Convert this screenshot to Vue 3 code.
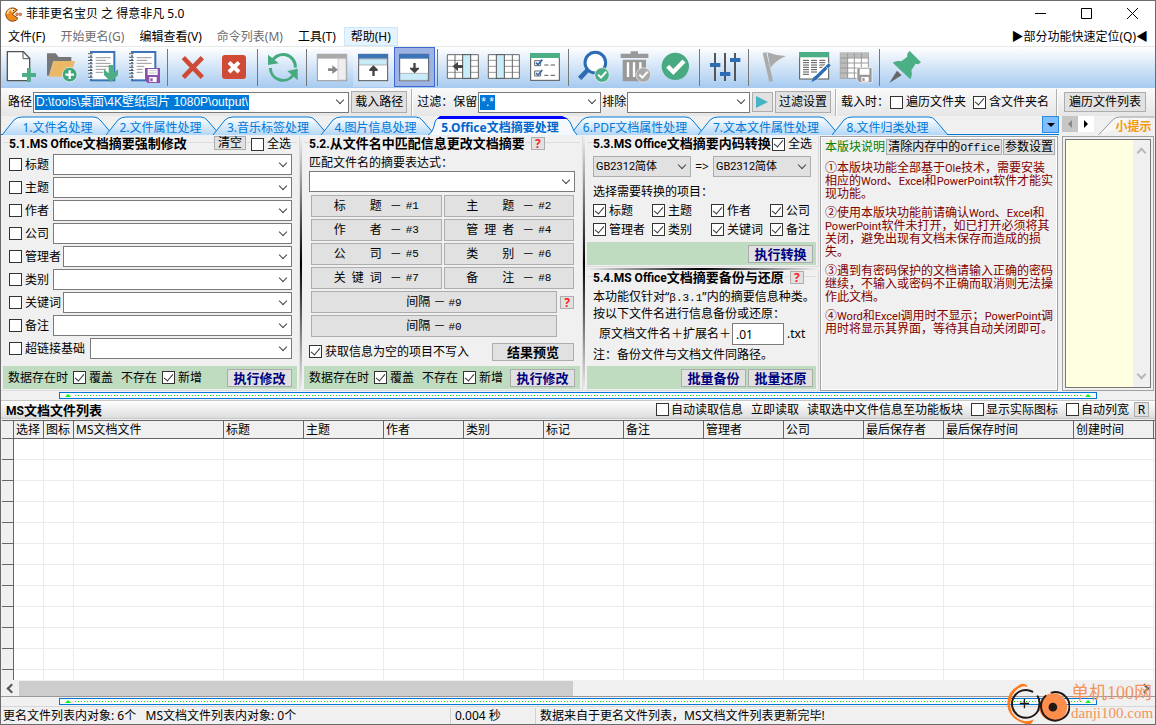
<script setup>
import { ref } from 'vue'

const tabs = [
  { label: '1.文件名处理', w: 111 },
  { label: '2.文件属性处理', w: 114 },
  { label: '3.音乐标签处理', w: 115 },
  { label: '4.图片信息处理', w: 114 },
  { label: '5.Office文档摘要处理', w: 149, active: true },
  { label: '6.PDF文档属性处理', w: 135 },
  { label: '7.文本文件属性处理', w: 141 },
  { label: '8.文件归类处理', w: 116 }
]
const tabPath = (t) => t.active
  ? `M0 19Q5 17 7 6Q9 1 14 1H${t.w - 15}Q${t.w - 10} 1 ${t.w - 7} 6L${t.w - 3} 15L${t.w} 19`
  : `M0 19L12 4Q15 1 20 1H${t.w - 19}Q${t.w - 15} 1 ${t.w - 12} 5L${t.w} 19`

const menus = [
  { t: '文件(F)' }, { t: '开始更名(G)', off: true }, { t: '编辑查看(V)' },
  { t: '命令列表(M)', off: true }, { t: '工具(T)' }, { t: '帮助(H)', hot: true }
]
const fields = ['标题', '主题', '作者', '公司', '管理者', '类别', '关键词', '备注', '超链接基础']
const fieldClass = (f) => (f.length === 2 ? 'short' : f.length === 3 ? 'mid' : 'long')
const marks = [
  ['标　　题', '#1'], ['主　　题', '#2'], ['作　　者', '#3'], ['管 理 者', '#4'],
  ['公　　司', '#5'], ['类　　别', '#6'], ['关 键 词', '#7'], ['备　　注', '#8']
]
const convert = ['标题', '主题', '作者', '公司', '管理者', '类别', '关键词', '备注']
const notes = [
  '①本版块功能全部基于Ole技术，需要安装\n相应的Word、Excel和PowerPoint软件才能实\n现功能。',
  '②使用本版块功能前请确认Word、Excel和\nPowerPoint软件未打开，如已打开必须将其\n关闭，避免出现有文档未保存而造成的损\n失。',
  '③遇到有密码保护的文档请输入正确的密码\n继续，不输入或密码不正确而取消则无法操\n作此文档。',
  '④Word和Excel调用时不显示；PowerPoint调\n用时将显示其界面，等待其自动关闭即可。'
]
const runs = (text) => text.split(/([A-Za-z]+)/).map((s) => ({ s, latin: /^[A-Za-z]/.test(s) }))
const columns = [
  ['', 12], ['选择', 30], ['图标', 30], ['MS文档文件', 150], ['标题', 80], ['主题', 80], ['作者', 80],
  ['类别', 80], ['标记', 80], ['备注', 80], ['管理者', 80], ['公司', 80], ['最后保存者', 80],
  ['最后保存时间', 130], ['创建时间', 80], ['', 2]
]
const path = ref('D:\\tools\\桌面\\4K壁纸图片 1080P\\output\\')
const keep = ref('*.*')
const suffix = ref('.01')
</script>

<template>
  <div class="window">
    <header class="titlebar">
      <svg class="logo" viewBox="0 0 54 48" aria-hidden="true">
        <path d="M22 25L37 12A20 20 0 1 0 39 37Z" fill="#ef8a1c" stroke="#8a4308" stroke-width="3" />
        <path d="M18 9Q8 13 7 24" stroke="#ffd98a" stroke-width="5" fill="none" />
        <circle cx="23" cy="13" r="5" fill="#fff" /><circle cx="25" cy="14" r="2" fill="#222" />
        <circle cx="36" cy="25" r="4" fill="#e9a06a" stroke="#a34a2a" stroke-width="2" /><circle cx="46" cy="25" r="4" fill="#e9a06a" stroke="#a34a2a" stroke-width="2" />
      </svg>
      <span class="caption">菲菲更名宝贝 之 得意非凡 5.0</span>
      <button class="winbtn" aria-label="最小化"><svg viewBox="0 0 11 11"><path d="M0 5.5H11" /></svg></button>
      <button class="winbtn" aria-label="最大化"><svg viewBox="0 0 11 11"><path d="M.5 .5H10.5V10.5H.5Z" /></svg></button>
      <button class="winbtn" aria-label="关闭"><svg viewBox="0 0 11 11"><path d="M0 0L11 11M11 0L0 11" /></svg></button>
    </header>

    <nav class="menubar">
      <button v-for="m in menus" :key="m.t" :class="{ off: m.off, hot: m.hot }">{{ m.t }}</button>
      <button class="locate">▶部分功能快速定位(Q)◀</button>
    </nav>

    <div class="toolbar">
      <button aria-label="新建"><svg viewBox="3 141 123 120">
        <path d="M22 155H70L89 175V242H22Z" fill="#fff" stroke="#555" stroke-width="4" /><path d="M69 156V176H89" fill="none" stroke="#555" stroke-width="3" />
        <path d="M81 204h11v15h16v12H92v15H81v-15H66v-12h15z" fill="#4bae84" /></svg></button>
      <button aria-label="添加文件夹"><svg viewBox="126 141 123 120">
        <path d="M141 160h26l9 11h38v12h-54l-13 44h-6z" fill="#777" /><path d="M161 183h64l-15 47h-63z" fill="#ebb868" />
        <circle cx="209" cy="224" r="22" fill="#3fa57a" stroke="#fff" stroke-width="2" /><path d="M209 211V237M196 224H222" stroke="#fff" stroke-width="7" /></svg></button>
      <button aria-label="导入列表"><svg viewBox="249 141 123 120">
        <rect x="273" y="156" width="70" height="85" fill="#fff" stroke="#3c74b5" stroke-width="6" />
        <path d="M287 173H332M287 181H318M287 190H332M287 199H332M287 208H318M287 217H310" stroke="#999" stroke-width="3" />
        <path d="M271 160V240" stroke="#fff" stroke-width="13" stroke-dasharray="6 4" /><path d="M271 160V240" stroke="#555" stroke-width="14" stroke-dasharray="3 7" />
        <path d="M326 195h14v25l14-12v17l-21 21-21-21v-17l14 12z" fill="#4bae84" /></svg></button>
      <button aria-label="保存列表"><svg viewBox="372 141 123 120">
        <rect x="396" y="156" width="70" height="85" fill="#fff" stroke="#3c74b5" stroke-width="6" />
        <path d="M410 173H455M410 181H441M410 190H455M410 199H432M410 208H428M410 217H428" stroke="#999" stroke-width="3" />
        <path d="M394 160V240" stroke="#fff" stroke-width="13" stroke-dasharray="6 4" /><path d="M394 160V240" stroke="#555" stroke-width="14" stroke-dasharray="3 7" />
        <path d="M435 204h45v45h-37l-8-8z" fill="#8e50ad" /><path d="M443 207h30v18h-30zM448 231h22v15h-22z" fill="#fff" /><path d="M446 212H470M446 219H470" stroke="#aaa" stroke-width="2" /><path d="M451 235h7v9h-7z" fill="#8e50ad" /></svg></button>
      <i class="sep"></i>
      <button aria-label="移除"><svg viewBox="519 141 123 120"><path d="M550 173L607 232M607 173L550 232" stroke="#cf4b35" stroke-width="14" /></svg></button>
      <button aria-label="清空列表"><svg viewBox="642 141 123 120"><rect x="666" y="165" width="72" height="72" rx="9" fill="#cf4b35" /><path d="M687 187L717 216M717 187L687 216" stroke="#fff" stroke-width="12" /></svg></button>
      <i class="sep"></i>
      <button aria-label="刷新"><svg viewBox="789 141 123 120">
        <path d="M815 186A37 37 0 0 1 886 203M811 204A38 38 0 0 0 880 225" fill="none" stroke="#45aa7d" stroke-width="9" />
        <path d="M804 164V195L836 190ZM893 241V206L862 213Z" fill="#45aa7d" /></svg></button>
      <i class="sep"></i>
      <button aria-label="右侧面板" disabled><svg viewBox="66 141 123 120">
        <rect x="82" y="163" width="88" height="79" fill="#fff" stroke="#999" stroke-width="3" /><rect x="81" y="162" width="90" height="14" fill="#aaa" />
        <path d="M144 176h24v64h-24z" fill="#eee" stroke="#bbb" stroke-width="2" /><path d="M114 205h13v-9l17 13-17 13v-9h-13z" fill="#888" /></svg></button>
      <button class="soft" aria-label="上方面板"><svg viewBox="189 141 123 120">
        <rect x="206" y="163" width="87" height="79" fill="#fff" stroke="#555" stroke-width="3" /><rect x="204" y="162" width="90" height="14" fill="#3c74b5" />
        <path d="M207 177h84v18h-84z" fill="#c9ecfb" stroke="#999" stroke-width="2" /><path d="M247 228v-15h-9v-5l12-12 13 12v5h-9v15z" fill="#444" /></svg></button>
      <button class="on" aria-label="下方面板"><svg viewBox="312 141 123 120">
        <rect x="329" y="163" width="87" height="79" fill="#fff" stroke="#555" stroke-width="3" /><rect x="327" y="162" width="90" height="14" fill="#3c74b5" />
        <path d="M330 220h84v21h-84z" fill="#c9ecfb" stroke="#999" stroke-width="2" /><path d="M370 189h7v14h10v4l-13 13-14-13v-4h10z" fill="#444" /></svg></button>
      <i class="sep"></i>
      <button aria-label="插入列"><svg viewBox="459 141 123 120">
        <rect x="472" y="164" width="93" height="71" fill="#fff" /><path d="M472 181H565M472 199H565M472 217H565" stroke="#999" stroke-width="3" />
        <path d="M472 164H565V235H472ZM495 164V235" fill="none" stroke="#666" stroke-width="3" /><rect x="518" y="164" width="24" height="71" fill="#c9ecfb" stroke="#555" stroke-width="3" />
        <path d="M488 199l16-14v10h15v9h-15v10z" fill="#444" /></svg></button>
      <button aria-label="列设置"><svg viewBox="582 141 123 120">
        <rect x="595" y="164" width="93" height="71" fill="#fff" /><path d="M595 181H688M595 199H688M595 217H688" stroke="#999" stroke-width="3" />
        <path d="M595 164H688V235H595ZM667 164V235" fill="none" stroke="#666" stroke-width="3" /><rect x="619" y="164" width="24" height="71" fill="#c9ecfb" stroke="#555" stroke-width="3" /></svg></button>
      <button aria-label="选项"><svg viewBox="705 141 123 120">
        <rect x="722" y="162" width="86" height="79" fill="#fff" stroke="#555" stroke-width="3" /><rect x="720" y="159" width="90" height="15" fill="#4bae84" />
        <path d="M734 182h18v15h-18zM734 213h18v15h-18z" fill="#fff" stroke="#666" stroke-width="3" /><path d="M738 188l6 6 13-15M738 219l6 6 13-15" fill="none" stroke="#3469a8" stroke-width="5" />
        <path d="M763 195H775M782 195H795M763 226H775M782 226H795" stroke="#555" stroke-width="3" /></svg></button>
      <i class="sep"></i>
      <button aria-label="查找"><svg viewBox="-18 141 123 120">
        <path d="M23 210L-1 235" stroke="#2c6cb5" stroke-width="14" /><circle cx="46" cy="188" r="31" fill="#fff" stroke="#2c6cb5" stroke-width="9" />
        <circle cx="66" cy="225" r="22" fill="#4bae84" stroke="#fff" stroke-width="2" /><path d="M54 224l9 9 16-18" fill="none" stroke="#fff" stroke-width="6" /></svg></button>
      <button aria-label="删除" disabled><svg viewBox="105 141 123 120">
        <path d="M122 161h30v-7h22v7h31v13h-83zM128 179h70v65h-70z" fill="#999" /><path d="M144 187V231M162 187V231M181 187V231" stroke="#fff" stroke-width="7" />
        <circle cx="190" cy="225" r="22" fill="#aaa" stroke="#eee" stroke-width="2" /><path d="M178 224l9 9 16-18" fill="none" stroke="#fff" stroke-width="6" /></svg></button>
      <button aria-label="执行"><svg viewBox="228 141 123 120"><circle cx="286" cy="199" r="41" fill="#48aa80" /><path d="M263 199l17 17 32-33" fill="none" stroke="#fff" stroke-width="13" /></svg></button>
      <i class="sep"></i>
      <button aria-label="参数"><svg viewBox="375 141 123 120">
        <path d="M405 159V243M435 159V243M465 159V243" stroke="#555" stroke-width="6" /><path d="M390 189h31v12h-31zM420 216h31v12h-31zM450 174h31v12h-31z" fill="#2c6cb5" /></svg></button>
      <i class="sep"></i>
      <button aria-label="标记" disabled><svg viewBox="522 141 123 120"><path d="M548 159l11-2 20 86-11 2z" fill="#aaa" /><path d="M562 157Q590 168 618 168Q592 178 571 203Z" fill="#aaa" /></svg></button>
      <button aria-label="编辑表格"><svg viewBox="645 141 123 120">
        <rect x="659" y="158" width="87" height="79" fill="#fff" stroke="#555" stroke-width="3" /><rect x="657" y="156" width="90" height="16" fill="#4bae84" />
        <path d="M669 181H687M669 188H687M669 195H687M669 202H687M669 209H687M669 216H687M669 223H687M693 181H711M693 188H711M693 195H711M693 202H711M693 209H711M693 216H711M718 181H736M718 188H736M718 195H736M718 202H736" stroke="#555" stroke-width="3" />
        <path d="M748 192L704 236" stroke="#fff" stroke-width="15" /><path d="M749 193L704 237" stroke="#2c6cb5" stroke-width="10" /><path d="M702 229l9 9-17 9z" fill="#2c6cb5" /><path d="M737 200l7 7" stroke="#fff" stroke-width="2" /></svg></button>
      <button aria-label="保存表格" disabled><svg viewBox="768 141 123 120">
        <rect x="781" y="159" width="84" height="76" fill="#fff" stroke="#999" stroke-width="3" /><path d="M781 159H865V173H804V235H781Z" fill="#bbb" />
        <path d="M781 174H865M781 189H865M781 204H865M781 219H865M803 159V235M823 159V235M844 159V235" stroke="#999" stroke-width="3" />
        <path d="M831 203h45v45h-37l-8-8z" fill="#999" stroke="#fff" stroke-width="2" /><path d="M839 206h29v18h-29zM844 231h22v14h-22z" fill="#fff" /><path d="M847 234h7v9h-7z" fill="#999" /></svg></button>
      <i class="sep"></i>
      <button aria-label="置顶"><svg viewBox="45 141 123 120"><path d="M81 212l14 14-37 23z" fill="#666" /><path d="M119 153L153 187L145 193L137 191L124 211Q128 225 121 238L68 188Q80 180 94 184L112 170Q110 160 119 153Z" fill="#4bae84" /></svg></button>
    </div>

    <div class="pathbar">
      <label for="path">路径</label>
      <div class="combo path"><input id="path" v-model="path" class="sel"><i class="chev"></i></div>
      <button class="btn b56">载入路径</button>
      <i class="vline"></i>
      <span>过滤：</span>
      <label for="keep" class="keep">保留</label>
      <div class="combo filt"><input id="keep" v-model="keep" class="sel"><i class="chev"></i></div>
      <label for="skip">排除</label>
      <div class="combo filt"><input id="skip"><i class="chev"></i></div>
      <button class="btn play" aria-label="应用过滤"><svg viewBox="0 0 12 12"><path d="M0 0L12 6L0 12Z" fill="#45b5c5" /></svg></button>
      <button class="btn b56">过滤设置</button>
      <i class="vline"></i>
      <span class="load">载入时：</span>
      <label class="ck"><input type="checkbox">遍历文件夹</label>
      <label class="ck gap7"><input type="checkbox" checked>含文件夹名</label>
      <i class="vline end"></i>
      <button class="btn b82">遍历文件列表</button>
    </div>

    <div class="workspace">
      <div class="tabrow">
        <div class="tabs" role="tablist">
          <button v-for="t in tabs" :key="t.label" role="tab" class="tab" :class="{ active: t.active }" :style="{ width: t.w + 'px' }">
            <svg :viewBox="`0 0 ${t.w} 19`" aria-hidden="true">
              <defs><linearGradient id="tabfill" x2="0" y2="1"><stop stop-color="#fff" /><stop offset="1" stop-color="#b4d7f6" /></linearGradient></defs>
              <path :d="tabPath(t)" :fill="t.active ? '#f5f9fd' : 'url(#tabfill)'" stroke="#0078d7" />
              <path v-if="t.active" :d="`M9 3L12 0H${t.w - 15}L${t.w - 9} 3Z`" fill="#00f" />
            </svg>
            <span>{{ t.label }}</span>
          </button>
        </div>
        <button class="tabmenu" aria-label="全部页签"><svg viewBox="0 0 8 4"><path d="M0 0H8L4 4Z" /></svg></button>
      </div>
      <div class="siderow">
        <button class="arrow dim" aria-label="向左"><svg viewBox="0 0 4 8"><path d="M4 0V8L0 4Z" fill="#888" /></svg></button>
        <button class="arrow" aria-label="向右"><svg viewBox="0 0 4 8"><path d="M0 0V8L4 4Z" /></svg></button>
        <div class="hint"><svg viewBox="0 0 56 19" aria-hidden="true"><path d="M0 19L14 4Q17 1 21 1H56" fill="#f7f7f7" stroke="#999" /></svg><span>小提示</span></div>
      </div>

      <div class="panels">
        <section class="group p1">
          <div class="head"><h2><span>5.1.MS Office</span>文档摘要强制修改</h2><button class="btn tiny push">清空</button><label class="ck"><input type="checkbox">全选</label></div>
          <div class="fields">
            <div v-for="(f, i) in fields" :key="f" class="field">
              <label class="ck" :class="fieldClass(f)"><input type="checkbox">{{ f }}</label>
              <div class="combo"><input :id="'f' + i" :aria-label="f"><i class="chev"></i></div>
            </div>
          </div>
          <div class="band"><span>数据存在时</span><label class="ck"><input type="checkbox" checked>覆盖</label><span class="no">不存在</span><label class="ck"><input type="checkbox" checked>新增</label><button class="btn act push">执行修改</button></div>
        </section>
        <i class="vsplit"></i>

        <section class="group p2">
          <div class="head"><h2><span>5.2.</span>从文件名中匹配信息更改文档摘要</h2><button class="btn q">?</button></div>
          <label class="line" for="expr">匹配文件名的摘要表达式：</label>
          <div class="combo expr"><input id="expr"><i class="chev"></i></div>
          <div class="marks">
            <button v-for="m in marks" :key="m[1]" class="btn"><span class="mk">{{ m[0] }}</span><span>－</span><span class="mono">{{ m[1] }}</span></button>
          </div>
          <div class="spacers">
            <button class="btn">间隔 － <span class="mono">#9</span></button><button class="btn q">?</button>
            <button class="btn">间隔 － <span class="mono">#0</span></button>
          </div>
          <div class="preview"><label class="ck"><input type="checkbox" checked>获取信息为空的项目不写入</label><button class="btn result push">结果预览</button></div>
          <div class="band"><span>数据存在时</span><label class="ck"><input type="checkbox" checked>覆盖</label><span class="no">不存在</span><label class="ck"><input type="checkbox" checked>新增</label><button class="btn act push">执行修改</button></div>
        </section>
        <i class="vsplit"></i>

        <div class="stack">
          <section class="group p3">
            <div class="head"><h2><span>5.3.MS Office</span>文档摘要内码转换</h2><label class="ck push"><input type="checkbox" checked>全选</label></div>
            <div class="codes">
              <div class="combo grey"><select aria-label="源内码"><option>GB2312简体</option></select><i class="chev"></i></div>
              <span>=&gt;</span>
              <div class="combo grey"><select aria-label="目标内码"><option>GB2312简体</option></select><i class="chev"></i></div>
            </div>
            <p class="line need">选择需要转换的项目：</p>
            <div class="items"><label v-for="c in convert" :key="c" class="ck"><input type="checkbox" checked>{{ c }}</label></div>
            <div class="band"><button class="btn act push">执行转换</button></div>
          </section>
          <i class="hsplit"></i>
          <section class="group p3 backup">
            <div class="head"><h2><span>5.4.MS Office</span>文档摘要备份与还原</h2><button class="btn q">?</button></div>
            <p class="line">本功能仅针对“<span class="mono">β.3.1</span>”内的摘要信息种类。</p>
            <p class="line">按以下文件名进行信息备份或还原：</p>
            <div class="rename"><label for="suffix">原文档文件名＋扩展名＋</label><input id="suffix" v-model="suffix"><span>.txt</span></div>
            <p class="line">注：备份文件与文档文件同路径。</p>
            <div class="band"><button class="btn act push">批量备份</button><button class="btn act">批量还原</button></div>
          </section>
        </div>

        <section class="about">
          <div class="abouthead"><h3>本版块说明</h3><button class="btn">清除内存中的<span class="mono">Office</span></button><button class="btn">参数设置</button></div>
          <p v-for="n in notes" :key="n"><span v-for="(r, i) in runs(n)" :key="i" :class="{ latin: r.latin }">{{ r.s }}</span></p>
        </section>
      </div>

      <aside class="side"><div class="memo"><div class="vscroll"><i class="up"></i><i class="down"></i></div></div></aside>
    </div>

    <div class="splitter"><i class="tri"></i><i class="dots"></i><i class="tri"></i></div>

    <div class="listhead">
      <h2><span>MS</span>文档文件列表</h2>
      <label class="ck push"><input type="checkbox">自动读取信息</label>
      <button class="flat">立即读取</button>
      <button class="flat">读取选中文件信息至功能板块</button>
      <label class="ck"><input type="checkbox">显示实际图标</label>
      <label class="ck"><input type="checkbox">自动列宽</label>
      <button class="btn r">R</button>
    </div>

    <div class="grid">
      <table>
        <colgroup><col v-for="(c, i) in columns" :key="i" :style="{ width: c[1] + 'px' }"></colgroup>
        <thead><tr><th v-for="(c, i) in columns" :key="i">{{ c[0] }}</th></tr></thead>
        <tbody><tr v-for="r in 12" :key="r"><td v-for="(c, i) in columns" :key="i"></td></tr></tbody>
      </table>
    </div>
    <div class="hscroll"><i class="left"></i><div class="track"><i class="thumb"></i></div><i class="right"></i></div>
    <div class="splitter"><i class="tri"></i><i class="dots"></i><i class="tri"></i></div>

    <footer class="status"><span class="s1">更名文件列表内对象: 6个 &nbsp; MS文档文件列表内对象: 0个</span><span class="s2">0.004 秒</span><span class="s3">数据来自于更名文件列表，MS文档文件列表更新完毕!</span></footer>

    <div class="mark">
      <svg viewBox="150 95 195 130" aria-hidden="true">
        <path d="M216 105Q202 94 188 107Q155 125 156 163Q160 205 207 220Q230 232 235 208Q220 216 203 212Q166 200 165 162Q167 124 196 111Q207 106 216 110Z" fill="#ff7a1a" />
        <path d="M232 124A42 42 0 1 0 250 180" fill="none" stroke="#231815" stroke-width="6" stroke-linecap="round" />
        <path d="M208 146V174M194 160H222" stroke="#231815" stroke-width="4" />
        <circle cx="295" cy="171" r="42" fill="#ff8d4c" /><path d="M290 127A43 43 0 1 1 272 137M248 138Q258 152 250 180" fill="none" stroke="#231815" stroke-width="6" stroke-linecap="round" />
        <circle cx="294" cy="171" r="13" fill="#231815" />
      </svg>
      <div class="words"><span class="cn">单机100网</span><span class="en">danji100.com</span></div>
    </div>
  </div>
</template>

<style>
html, body { margin: 0; background: #f0f0f0; }
</style>

<style scoped>
* { box-sizing: border-box; }
.window { position: relative; display: flex; flex-direction: column; height: 100vh; min-width: 1100px; overflow: hidden; border: 1px solid #6b6b6b; background: #f0f0f0; color: #000; font: 12px/16px "Noto Sans", "Noto Sans CJK SC", sans-serif; white-space: nowrap; }
button, input, select { margin: 0; padding: 0; border: 0; background: none; color: inherit; font: inherit; }
h2, h3, p { margin: 0; font-size: 12px; line-height: 16px; }
h2 { font-size: 13px; }
h2 span { font-family: Roboto, sans-serif; font-size: 12px; line-height: 0; }
p { font-weight: 400; }
i { display: block; }
.mono { font-family: "Liberation Mono", monospace; font-size: 11px; line-height: 0; }
.latin { font-family: Roboto, sans-serif; font-size: 11px; line-height: 0; }
.push { margin-left: auto; }

.titlebar { display: flex; align-items: center; height: 25px; background: #fff; flex: none; }
.logo { width: 18px; height: 16px; margin: 0 3px 0 4px; }
.caption { margin-right: auto; }
.winbtn { width: 46px; height: 25px; display: grid; place-items: center; }
.winbtn svg { width: 11px; height: 11px; fill: none; stroke: #000; }

.menubar { display: flex; height: 21px; padding-top: 1px; background: #fff; border-bottom: 1px solid #e8e8e8; flex: none; }
.menubar button { padding: 0 6px; border: 1px solid transparent; line-height: 17px; margin-right: 1px; }
.menubar .off { color: #6d6d6d; }
.menubar .hot { background: #e5f3ff; border-color: #cce8ff; }
.menubar .locate { margin: 0 0 0 auto; }

.toolbar { display: flex; height: 41px; background: linear-gradient(#fff, #a6caf0); flex: none; }
.toolbar button { width: 41px; height: 40px; flex: none; }
.toolbar svg { display: block; width: 100%; height: 100%; }
.toolbar .soft { background: rgba(255, 255, 255, .25); }
.toolbar .on { background: #9db3e4; box-shadow: inset 0 0 0 1px #3f68d0; }
.toolbar .sep { width: 8px; flex: none; margin: 2px 0; background: linear-gradient(#777, #777) 2px 0 / 1px 100% no-repeat; }

.pathbar { display: flex; align-items: center; height: 28px; padding: 0 9px 0 7px; background: linear-gradient(#fafafa, #e6e6e6); flex: none; }
.combo { position: relative; display: flex; align-items: center; height: 21px; background: #fff; border: 1px solid #7a7a7a; min-width: 0; }
.combo input, .combo select { flex: 1; width: 0; min-width: 0; height: 17px; padding: 0 2px; appearance: none; outline: 0; }
.combo .sel { flex: none; width: auto; field-sizing: content; height: 15px; padding: 0 1px; margin-left: 1px; background: #0078d7; color: #fff; font-family: "Liberation Sans", "Noto Sans CJK SC", sans-serif; }
.chev { flex: none; width: 6px; height: 6px; margin: 0 5px 4px auto; border: solid #444; border-width: 0 1px 1px 0; transform: rotate(45deg); }
.combo.path { flex: 320 1 0; margin: 0 2px 0 1px; }
.combo.filt { flex: 123 1 0; margin: 0 1px; }
.btn { display: block; background: #e1e1e1; border: 1px solid #adadad; text-align: center; flex: none; }
.b56 { width: 56px; height: 22px; }
.b82 { width: 82px; height: 20px; }
.play { width: 21px; height: 20px; margin: 0 2px 0 1px; }
.play svg { display: block; width: 12px; height: 12px; margin: auto; }
.vline { width: 2px; height: 27px; margin: 0 4px; background: linear-gradient(90deg, #b0b0b0 50%, #fff 50%); flex: none; }
.vline.end { margin: 0 6px 0 7px; }
.load { margin-right: 1px; }
.gap7 { margin-left: 7px; }
.ck { display: flex; align-items: center; gap: 3px; flex: none; }
.ck input { display: grid; place-items: center; width: 13px; height: 13px; appearance: none; background: #fff; border: 1px solid #333; flex: none; }
.ck input:checked::before { content: ""; width: 4px; height: 8px; margin-top: -3px; border: solid #333; border-width: 0 1px 1px 0; transform: rotate(40deg); }

.workspace { display: grid; grid-template-columns: minmax(0, 1fr) 96px; grid-template-rows: 19px 256px; flex: none; }
.tabrow { display: flex; align-items: flex-start; border-bottom: 1px solid #0078d7; }
.tabs { display: flex; margin-left: 1px; }
.tab { position: relative; height: 19px; margin-right: -7px; color: #0078d7; flex: none; text-align: center; }
.tab:not(:first-child) { padding-right: 5px; }
.tab svg { position: absolute; inset: 0; width: 100%; height: 100%; }
.tab span { position: relative; top: 2px; }
.tab.active { z-index: 1; font-weight: 700; color: #0066cc; }
.tabmenu { width: 17px; height: 17px; margin: 0 0 0 auto; background: #80bfff; border: 1px solid #2b8ae2; display: grid; place-items: center; }
.tabmenu svg { width: 8px; height: 4px; }
.siderow { display: flex; padding-left: 3px; }
.arrow { width: 16px; height: 16px; background: #fff; display: grid; place-items: center; }
.arrow.dim { background: #c6c6c6; }
.arrow svg { width: 4px; height: 8px; }
.hint { position: relative; flex: 1; margin-left: 4px; text-align: center; padding-left: 14px; color: #f59a0a; font-weight: 700; }
.hint svg { position: absolute; left: 0; top: 0; width: 100%; height: 19px; }
.hint span { position: relative; top: 3px; }

.panels { display: grid; grid-template-columns: minmax(0, 299fr) 2px minmax(0, 281fr) 2px minmax(0, 234fr) minmax(0, 240fr); border-top: 1px solid #e8f2fc; }
.group { position: relative; display: flex; flex-direction: column; padding: 0 2px 1px; border-right: 1px solid #dcdcdc; border-bottom: 1px solid #dcdcdc; min-width: 0; }
.head { display: flex; align-items: flex-start; height: 18px; padding: 0 6px; background: linear-gradient(#dcdcdc, #dcdcdc) 0 6px / 100% 1px no-repeat; flex: none; }
.head > * { background-color: #f0f0f0; }
.head h2 { line-height: 15px; flex: none; }
.head .ck { line-height: 16px; margin-left: 5px; }
.head .ck.push { margin-left: auto; }
.head .btn { background: #e1e1e1; }
.tiny { width: 32px; height: 14px; line-height: 12px; }
.head .tiny.push { margin-left: auto; }
.q { width: 14px; height: 13px; color: #f22; line-height: 11px; font-weight: 700; }
.head .q { margin: 1px 0 0 6px; }
.p1 .head { padding-right: 6px; }
.fields { display: grid; gap: 2px; padding: 0 5px 0 6px; }
.field { display: flex; }
.field .combo { flex: 1; }
.field .short { width: 44px; }
.field .mid { width: 54px; }
.field .long { width: 81px; }
.band { display: flex; align-items: center; height: 23px; margin-top: auto; padding: 0 5px; background: #c0dcc0; flex: none; }
.band .ck { margin-left: 5px; }
.band .no { margin-left: 8px; }
.act { width: 65px; height: 18px; line-height: 16px; color: #000080; font-size: 13px; font-weight: 700; }
.act + .act { margin-left: 2px; }
.vsplit { background: linear-gradient(#f0f0f0, #000 50%, #f0f0f0); }
.hsplit { height: 2px; background: linear-gradient(90deg, #f0f0f0, #000 50%, #f0f0f0); flex: none; margin-top: 1px; }

.line { display: block; line-height: 17px; padding: 0 5px; }
.expr { margin: 0 5px 3px; flex: none; }
.marks { display: grid; grid-template-columns: 1fr 1fr; gap: 2px; padding: 0 6px 0 7px; }
.marks .btn, .spacers .btn:not(.q) { height: 22px; line-height: 20px; }
.marks .btn { display: flex; justify-content: center; align-items: center; }
.marks .mk { width: 48px; text-align-last: justify; margin-right: 8px; }
.marks .mono { margin-left: 4px; }
.spacers { display: grid; grid-template-columns: minmax(0, 1fr) 14px; gap: 2px 3px; align-items: center; padding: 2px 6px 0 7px; }
.preview { display: flex; align-items: center; height: 27px; padding: 2px 6px 0 5px; }
.result { width: 82px; height: 18px; line-height: 16px; font-size: 13px; font-weight: 700; }
.p2 .head { padding-left: 5px; }

.stack { display: flex; flex-direction: column; min-width: 0; }
.p3 { height: 131px; flex: none; }
.p3.backup { height: auto; flex: 1; }
.p3 .head { padding-left: 6px; padding-right: 4px; }
.p3 .line { padding-left: 6px; }
.p3 .band { padding-right: 3px; }
.codes { display: flex; align-items: center; justify-content: space-between; padding: 2px 5px 0 6px; }
.combo.grey { width: 98px; background: #e1e1e1; border-color: #adadad; }
.grey select { font-family: Roboto, "Noto Sans CJK SC", sans-serif; font-size: 11px; }
.need { margin-top: 6px; }
.items { display: grid; grid-template-columns: repeat(4, 59px); grid-auto-rows: 19px; padding: 1px 0 0 6px; }
.rename { display: flex; align-items: center; padding: 1px 0 1px 12px; }
.rename input { width: 52px; height: 22px; padding: 0 3px; background: #fff; border: 1px solid #7a7a7a; margin: 0 3px 0 1px; }

.about { display: flex; flex-direction: column; border: 1px solid #a0a0a0; outline: 1px solid #fff; outline-offset: -2px; margin: 0 1px 0 1px; padding: 1px 2px 0 4px; color: #800000; min-width: 0; overflow: hidden; }
.abouthead { display: flex; align-items: center; gap: 1px; height: 18px; margin-bottom: 5px; color: #000; }
.abouthead h3 { width: 60px; color: #008000; font-weight: 400; margin-right: auto; }
.abouthead .btn { height: 16px; line-height: 14px; padding: 0 1px; }
.about p { line-height: 13px; margin-bottom: 6px; white-space: pre; }

.side { border: 1px solid #a0a0a0; margin: 1px 1px 0 3px; padding: 2px; }
.memo { height: 100%; display: flex; justify-content: flex-end; background: #ffffe1; border: 1px solid #777; }
.vscroll { width: 17px; display: flex; flex-direction: column; justify-content: space-between; align-items: center; padding: 9px 0; background: #f0f0f0; }
.up, .down { width: 7px; height: 7px; border: solid #b8b8b8; border-width: 2px 0 0 2px; transform: rotate(45deg); }
.down { transform: rotate(225deg); }

.splitter { display: flex; align-items: center; height: 7px; margin: 1px 58px; padding: 0 5px; border: 1px solid #0078d7; background: #fafafa; flex: none; }
.tri { border: solid transparent; border-width: 0 3px 3px; border-bottom-color: #0f0; }
.dots { flex: 1; height: 1px; margin: 0 4px; background: repeating-linear-gradient(90deg, #0e0 0 1px, transparent 1px 3px); }

.listhead { display: flex; align-items: center; height: 19px; margin-bottom: 1px; padding: 0 6px 0 5px; gap: 8px; background: linear-gradient(#fff, #dcdcdc); border: solid #c8c8c8; border-width: 1px 0; flex: none; }
.listhead .ck { gap: 2px; }
.r { width: 15px; height: 15px; line-height: 13px; margin-left: -3px; }

.grid { flex: 1; min-height: 0; overflow: hidden; background: #fff; border-top: 1px solid #666; margin-left: 1px; }
table { width: 100%; border-collapse: separate; border-spacing: 0; table-layout: fixed; }
th { height: 18px; padding: 0 2px; text-align: left; font-weight: 400; line-height: 16px; background: #f0f0f0; border: solid #666; border-width: 0 1px 1px 0; overflow: hidden; }
td { height: 21px; padding: 0; border: solid #ececec; border-width: 0 1px 1px 0; }
td:first-child { background: #f0f0f0; border-color: #666; }
.hscroll { display: flex; align-items: center; height: 17px; padding: 0 1px 0 1px; border-bottom: 1px solid #999; flex: none; }
.track { flex: 1; height: 15px; margin: 0 2px 0 4px; }
.thumb { width: 49.5%; height: 15px; background: #cdcdcd; }
.left, .right { width: 7px; height: 7px; border: solid #555; border-width: 2px 0 0 2px; transform: rotate(-45deg); margin-left: 6px; }
.right { transform: rotate(135deg); margin: 0 6px 0 0; }

.status { display: flex; align-items: center; height: 18px; border-top: 1px solid #d7d7d7; padding-left: 2px; flex: none; }
.s1 { width: 447px; flex: none; }
.s2 { width: 85px; padding-left: 4px; border-left: 1px solid #d0d0d0; flex: none; }
.s3 { padding-left: 4px; border-left: 1px solid #d0d0d0; }

.mark { position: absolute; right: 2px; bottom: -1px; display: flex; height: 43px; }
.mark svg { width: 65px; height: 43px; }
.words { width: 83px; padding-left: 1px; color: #f4935a; }
.words span { display: block; }
.cn { font: 18px/22px "Liberation Serif", "Noto Sans CJK SC", serif; }
.en { font: 15px/18px "Liberation Serif", serif; }
</style>
